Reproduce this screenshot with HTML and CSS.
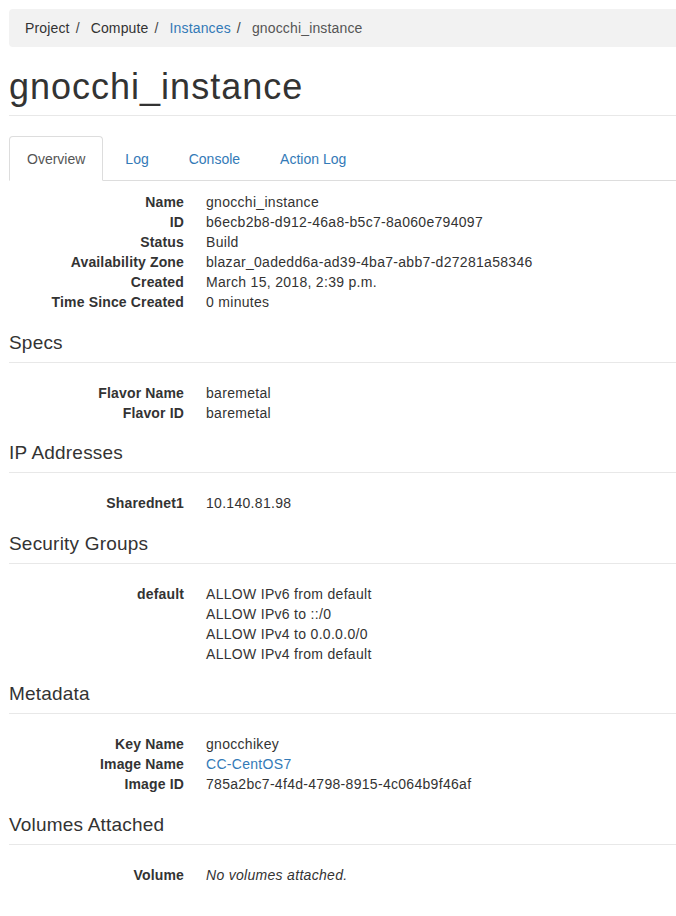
FILE: index.html
```html
<!DOCTYPE html>
<html lang="en">
<head>
<meta charset="utf-8">
<title>gnocchi_instance</title>
<link rel="stylesheet" href="styles.css">
</head>
<body>
<div class="page">
  <ol class="breadcrumb">
    <li class="crumb">Project</li>
    <li class="sep">/</li>
    <li class="crumb">Compute</li>
    <li class="sep">/</li>
    <li class="crumb"><a href="#" class="link">Instances</a></li>
    <li class="sep">/</li>
    <li class="crumb current">gnocchi_instance</li>
  </ol>

  <div class="page-header">
    <h1 class="title">gnocchi_instance</h1>
  </div>

  <ul class="tabs">
    <li class="tab active"><a href="#">Overview</a></li>
    <li class="tab"><a href="#">Log</a></li>
    <li class="tab"><a href="#">Console</a></li>
    <li class="tab"><a href="#">Action Log</a></li>
  </ul>

  <div class="tab-content">
    <dl class="info">
      <dt>Name</dt><dd>gnocchi_instance</dd>
      <dt>ID</dt><dd>b6ecb2b8-d912-46a8-b5c7-8a060e794097</dd>
      <dt>Status</dt><dd>Build</dd>
      <dt>Availability Zone</dt><dd>blazar_0adedd6a-ad39-4ba7-abb7-d27281a58346</dd>
      <dt>Created</dt><dd>March 15, 2018, 2:39 p.m.</dd>
      <dt>Time Since Created</dt><dd>0 minutes</dd>
    </dl>

    <h4 class="section">Specs</h4>
    <dl class="info">
      <dt>Flavor Name</dt><dd>baremetal</dd>
      <dt>Flavor ID</dt><dd>baremetal</dd>
    </dl>

    <h4 class="section">IP Addresses</h4>
    <dl class="info">
      <dt>Sharednet1</dt><dd>10.140.81.98</dd>
    </dl>

    <h4 class="section">Security Groups</h4>
    <dl class="info">
      <dt>default</dt>
      <dd>
        <ul class="rules">
          <li>ALLOW IPv6 from default</li>
          <li>ALLOW IPv6 to ::/0</li>
          <li>ALLOW IPv4 to 0.0.0.0/0</li>
          <li>ALLOW IPv4 from default</li>
        </ul>
      </dd>
    </dl>

    <h4 class="section">Metadata</h4>
    <dl class="info">
      <dt>Key Name</dt><dd>gnocchikey</dd>
      <dt>Image Name</dt><dd><a href="#" class="link">CC-CentOS7</a></dd>
      <dt>Image ID</dt><dd>785a2bc7-4f4d-4798-8915-4c064b9f46af</dd>
    </dl>

    <h4 class="section">Volumes Attached</h4>
    <dl class="info">
      <dt>Volume</dt><dd><em>No volumes attached.</em></dd>
    </dl>
  </div>
</div>
</body>
</html>
```

FILE: styles.css
```css
html, body {
  margin: 0;
  padding: 0;
  background: #fff;
  overflow-x: hidden;
}

body {
  font-family: "Liberation Sans", Arial, Helvetica, sans-serif;
  font-size: 14px;
  line-height: 20px;
  color: #333;
  letter-spacing: 0.15px;
}

.page {
  padding: 9px 0 0 9px;
}

.link {
  color: #337ab7;
  text-decoration: none;
}

/* Breadcrumb */
.breadcrumb {
  display: flex;
  align-items: center;
  list-style: none;
  margin: 0;
  padding: 9px 16px 8px;
  line-height: 21px;
  background: #f2f2f2;
  border-radius: 4px 0 0 4px;
}

.crumb {
  color: #333;
}

.crumb.current {
  color: #555;
}

.sep {
  color: #444;
  padding: 0 11px 0 6px;
}

/* Page header */
.page-header {
  margin-top: 20px;
  padding-bottom: 8px;
  border-bottom: 1px solid #e8e8e8;
}

.title {
  margin: 0;
  font-size: 36px;
  line-height: 40px;
  font-weight: 500;
  letter-spacing: 1px;
  color: #333;
}

/* Tabs */
.tabs {
  display: flex;
  list-style: none;
  margin: 20px 0 0;
  padding: 0;
  border-bottom: 1px solid #ddd;
  letter-spacing: 0;
}

.tab {
  margin-bottom: -1px;
  margin-right: 4px;
}

.tab a {
  display: block;
  padding: 12px 17px 11px;
  line-height: 20px;
  border: 1px solid transparent;
  border-radius: 4px 4px 0 0;
  color: #337ab7;
  text-decoration: none;
}

.tab.active a {
  color: #555;
  background: #fff;
  border-color: #ddd #ddd transparent;
}

/* Content */
.tab-content {
  padding-top: 11px;
}

.info {
  display: grid;
  grid-template-columns: 175px 1fr;
  column-gap: 22px;
  margin: 0;
}

.info dt {
  font-weight: bold;
  text-align: right;
  white-space: nowrap;
}

.info dd {
  margin: 0;
  letter-spacing: 0.3px;
}

.rules {
  list-style: none;
  margin: 0;
  padding: 0;
}

.section {
  margin: 19.6px 0 20px;
  padding-bottom: 9px;
  font-size: 19px;
  line-height: 21px;
  font-weight: normal;
  color: #333;
  letter-spacing: 0.2px;
  border-bottom: 1px solid #e8e8e8;
}
```
